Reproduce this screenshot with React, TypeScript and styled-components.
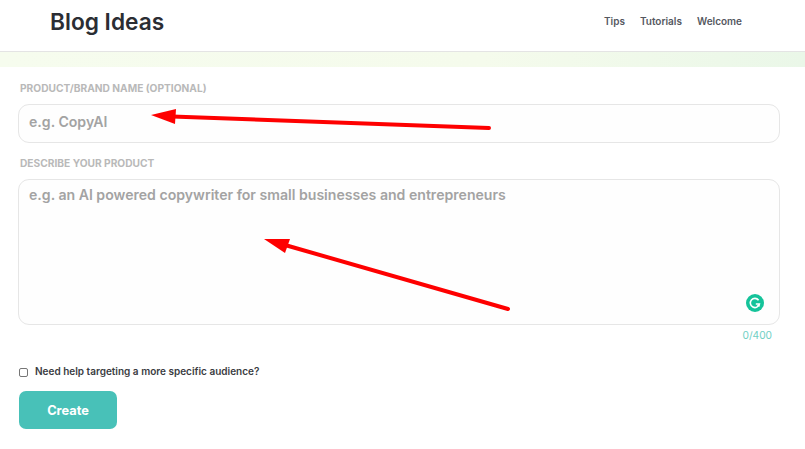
import React from "react";
import styled, { createGlobalStyle } from "styled-components";

const GlobalStyle = createGlobalStyle`
    html, body {
        margin: 0;
        padding: 0;
        background: #ffffff;
        font-family: Inter, "Noto Sans", sans-serif;
    }
`;

const Page = styled.div`
    position: relative;
    width: 805px;
    height: 449px;
    overflow: hidden;
    background: #fff;
`;

const Header = styled.header`
    display: flex;
    align-items: center;
    justify-content: space-between;
    height: 52px;
    padding: 0 63px 8px 50px;
    box-sizing: border-box;
    border-bottom: 1px solid #e4e4e4;
`;

const Title = styled.h1`
    margin: 0;
    font-size: 22.7px;
    line-height: 28px;
    font-weight: 600;
    color: #2b2d33;
`;

const Nav = styled.nav`
    display: flex;
    gap: 15px;
    padding-bottom: 2px;
`;

const NavLink = styled.a`
    font-size: 10px;
    font-weight: 600;
    color: #55585f;
`;

const Strip = styled.div`
    height: 15px;
    background: linear-gradient(90deg, #f6fcee 0%, #f5fbec 60%, #eaf7e8 100%);
`;

const Form = styled.form`
    display: flex;
    flex-direction: column;
    align-items: flex-start;
    padding: 15px 25px 0 18px;
`;

const Label = styled.label`
    margin-left: 2px;
    height: 13px;
    margin-bottom: 9px;
    font-size: 10.2px;
    line-height: 13px;
    font-weight: 700;
    color: #b9b9b9;
`;

const Field = styled.div<{ $height: number; $top: number }>`
    position: relative;
    box-sizing: border-box;
    width: 762px;
    height: ${p => p.$height}px;
    padding: ${p => p.$top}px 10px;
    border: 1px solid #e6e6e6;
    border-radius: 11px;
    background: #fefefe;
    font-size: 14.1px;
    line-height: 20px;
    font-weight: 600;
    color: #a3a3a3;
`;

const NameField = styled(Field)`
    margin-bottom: 14px;
`;

const Badge = styled.svg`
    position: absolute;
    right: 15px;
    bottom: 12px;
`;

const Counter = styled.div`
    align-self: flex-end;
    margin: 3px 8px 0 0;
    font-size: 10.2px;
    line-height: 14px;
    color: #6fcfc4;
`;

const CheckRow = styled.div`
    display: flex;
    align-items: center;
    gap: 7px;
    margin: 22px 0 0 1px;
`;

const CheckBox = styled.span`
    box-sizing: border-box;
    width: 9px;
    height: 9px;
    border: 1px solid #767676;
    border-radius: 2px;
`;

const CheckText = styled.span`
    margin-bottom: 2px;
    font-size: 10px;
    line-height: 14px;
    font-weight: 600;
    color: #3a3c42;
`;

const CreateButton = styled.button`
    width: 98px;
    height: 38px;
    margin: 11px 0 0 1px;
    border: 0;
    border-radius: 7px;
    background: #48c1b8;
    color: #fff;
    font-family: inherit;
    font-size: 12.8px;
    font-weight: 700;
`;

const Arrows = styled.svg`
    position: absolute;
    inset: 0;
    pointer-events: none;
`;

export default function App() {
    return (
        <Page>
            <GlobalStyle />
            <Header>
                <Title>Blog Ideas</Title>
                <Nav>
                    <NavLink>Tips</NavLink>
                    <NavLink>Tutorials</NavLink>
                    <NavLink>Welcome</NavLink>
                </Nav>
            </Header>
            <Strip />
            <Form>
                <Label>PRODUCT/BRAND NAME (OPTIONAL)</Label>
                <NameField $height={39} $top={7}>e.g. CopyAI</NameField>
                <Label>DESCRIBE YOUR PRODUCT</Label>
                <Field $height={146} $top={5}>
                    e.g. an AI powered copywriter for small businesses and entrepreneurs
                    <Badge width="18" height="18" viewBox="0 0 18 18">
                        <circle cx="9" cy="9" r="9" fill="#15c39a" />
                        <path d="M12.6 6.2A4.6 4.6 0 1 0 13.4 10H9.8" fill="none" stroke="#fff" strokeWidth="1.6" />
                        <path d="M10.4 12.2l2.6-2.2 1 2.6z" fill="#fff" />
                    </Badge>
                </Field>
                <Counter>0/400</Counter>
                <CheckRow>
                    <CheckBox />
                    <CheckText>Need help targeting a more specific audience?</CheckText>
                </CheckRow>
                <CreateButton type="button">Create</CreateButton>
            </Form>
            <Arrows width="805" height="449" viewBox="0 0 805 449">
                <path d="M489 128L172 116.5" stroke="#fe0000" strokeWidth="4" strokeLinecap="round" />
                <path d="M151 115L176 109L175 124z" fill="#fe0000" />
                <path d="M508 309L285 245" stroke="#fe0000" strokeWidth="4" strokeLinecap="round" />
                <path d="M264 239L290 239L285 253z" fill="#fe0000" />
            </Arrows>
        </Page>
    );
}
